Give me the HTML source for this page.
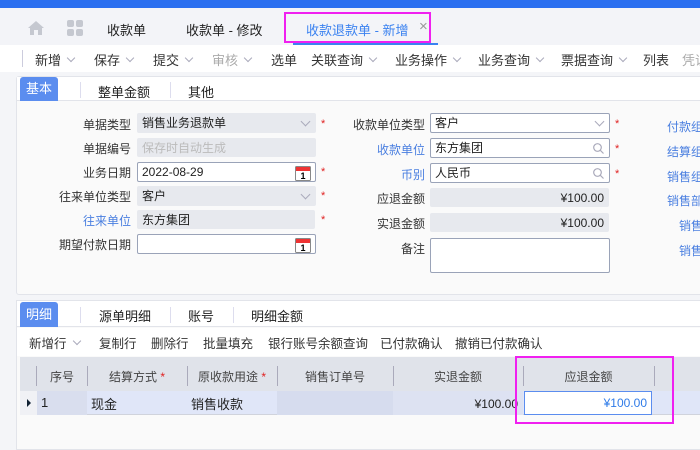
<!DOCTYPE html><html><head><meta charset="utf-8"><style>
*{margin:0;padding:0;box-sizing:border-box}
body{width:700px;height:443px;overflow:hidden;background:#f4f5f8;font-family:"Liberation Sans","Noto Sans CJK SC",sans-serif;font-size:12px;color:#222;position:relative}
.a{position:absolute;white-space:nowrap}
.lb{position:absolute;text-align:right;color:#333;font-size:12px}
.bl{color:#4a7fe0}
.in{position:absolute;height:20px;border:1px solid #9aa3b8;border-radius:2px;background:#fff;padding-left:4px;line-height:18px;font-size:12px}
.ro{background:#e7e9ee;border-color:#e7e9ee}
.st{position:absolute;color:#e02020;font-size:11px}
.cv{position:absolute;right:6px;top:4px;width:7px;height:7px;border-right:1px solid #aab;border-bottom:1px solid #aab;transform:rotate(45deg)}
.t{position:absolute;top:50px;font-size:13px;color:#333;white-space:nowrap}
.b{position:absolute;top:333px;font-size:12.5px;color:#333;white-space:nowrap}
.dd{display:inline-block;width:6px;height:6px;border-right:1px solid #aab;border-bottom:1px solid #aab;transform:rotate(45deg);margin:0 0 4px 7px}
</style></head><body>
<div class="a" style="left:0;top:0;width:700px;height:8px;background:#2a6ff0"></div>
<div class="a" style="left:0;top:8px;width:700px;height:37px;background:#f3f4f8"></div>
<svg class="a" style="left:27px;top:20px" width="18" height="16" viewBox="0 0 18 16"><path d="M9 1L1 8h2v7h4v-5h4v5h4V8h2z" fill="#c5c8d0"/></svg>
<svg class="a" style="left:67px;top:20px" width="16" height="16"><rect x="0" y="0" width="7" height="7" rx="2" fill="#c5c8d0"/><rect x="9" y="0" width="7" height="7" rx="2" fill="#c5c8d0"/><rect x="0" y="9" width="7" height="7" rx="2" fill="#c5c8d0"/><rect x="9" y="9" width="7" height="7" rx="2" fill="#c5c8d0"/></svg>
<div class="a" style="left:107px;top:20px;font-size:13px">收款单</div>
<div class="a" style="left:186px;top:20px;font-size:13px">收款单 - 修改</div>
<div class="a" style="left:284px;top:12px;width:147px;height:31px;border:2px solid #f020f0"></div>
<div class="a" style="left:306px;top:20px;font-size:13px;color:#3b82f0">收款退款单 - 新增</div>
<div class="a" style="left:419px;top:18px;font-size:15px;color:#999">×</div>
<div class="a" style="left:293px;top:43px;width:145px;height:2px;background:#3b82f0"></div>
<div class="a" style="left:0;top:45px;width:700px;height:27px;background:#fff"></div>
<div class="a" style="left:22px;top:50px;width:1px;height:17px;background:#ccd"></div>
<div class="t" style="left:35px">新增<i class="dd"></i></div>
<div class="t" style="left:94px">保存<i class="dd"></i></div>
<div class="t" style="left:153px">提交<i class="dd"></i></div>
<div class="t" style="left:212px;color:#aaa">审核<i class="dd"></i></div>
<div class="t" style="left:271px">选单</div>
<div class="t" style="left:311px">关联查询<i class="dd"></i></div>
<div class="t" style="left:395px">业务操作<i class="dd"></i></div>
<div class="t" style="left:478px">业务查询<i class="dd"></i></div>
<div class="t" style="left:561px">票据查询<i class="dd"></i></div>
<div class="t" style="left:643px">列表</div>
<div class="t" style="left:682px;color:#aaa">凭证</div>
<!-- top panel -->
<div class="a" style="left:16px;top:76px;width:690px;height:219px;background:#fafafa;border:1px solid #e2e4ea;border-radius:3px"></div>
<div class="a" style="left:17px;top:77px;width:690px;height:24px;background:#fff;border-bottom:1px solid #e2e4ea"></div>
<div class="a" style="left:20px;top:77px;width:38px;height:24px;background:#5b8def;color:#fff;border-radius:3px 3px 0 0;text-align:center;line-height:24px;font-size:13px">基本</div>
<div class="a" style="left:80px;top:82px;width:1px;height:16px;background:#dde"></div>
<div class="a" style="left:98px;top:82px;font-size:13px">整单金额</div>
<div class="a" style="left:170px;top:82px;width:1px;height:16px;background:#dde"></div>
<div class="a" style="left:188px;top:82px;font-size:13px">其他</div>
<!-- left col -->
<div class="lb" style="left:0;width:131px;top:116px">单据类型</div>
<div class="in ro" style="left:137px;top:113px;width:179px">销售业务退款单<i class="cv"></i></div><div class="st" style="left:321px;top:118px">*</div>
<div class="lb" style="left:0;width:131px;top:140px">单据编号</div>
<div class="in ro" style="left:137px;top:138px;width:179px;height:19px;color:#bbb">保存时自动生成</div>
<div class="lb" style="left:0;width:131px;top:164px">业务日期</div>
<div class="in" style="left:137px;top:162px;width:179px">2022-08-29<svg style="position:absolute;right:4px;top:2px" width="16" height="16"><rect x="0.5" y="1.5" width="15" height="14" rx="1" fill="#fff" stroke="#888"/><rect x="1" y="2" width="14" height="4" fill="#e33"/><text x="8" y="14" font-size="9" font-weight="bold" text-anchor="middle" font-family="Liberation Sans">1</text></svg></div><div class="st" style="left:321px;top:166px">*</div>
<div class="lb" style="left:0;width:131px;top:188px">往来单位类型</div>
<div class="in ro" style="left:137px;top:186px;width:179px">客户<i class="cv"></i></div><div class="st" style="left:321px;top:190px">*</div>
<div class="lb bl" style="left:0;width:131px;top:212px">往来单位</div>
<div class="in ro" style="left:137px;top:210px;width:178px;height:19px">东方集团</div><div class="st" style="left:321px;top:214px">*</div>
<div class="lb" style="left:0;width:131px;top:236px">期望付款日期</div>
<div class="in" style="left:137px;top:234px;width:179px"><svg style="position:absolute;right:4px;top:2px" width="16" height="16"><rect x="0.5" y="1.5" width="15" height="14" rx="1" fill="#fff" stroke="#888"/><rect x="1" y="2" width="14" height="4" fill="#e33"/><text x="8" y="14" font-size="9" font-weight="bold" text-anchor="middle" font-family="Liberation Sans">1</text></svg></div>
<!-- right col -->
<div class="lb" style="left:300px;width:125px;top:116px">收款单位类型</div>
<div class="in" style="left:430px;top:113px;width:180px">客户<i class="cv"></i></div><div class="st" style="left:615px;top:118px">*</div>
<div class="lb bl" style="left:300px;width:125px;top:141px">收款单位</div>
<div class="in" style="left:430px;top:138px;width:180px">东方集团<svg style="position:absolute;right:5px;top:4px" width="11" height="11"><circle cx="4.5" cy="4.5" r="3.8" fill="none" stroke="#aab" stroke-width="1.2"/><path d="M7.3 7.3L10.5 10.5" stroke="#aab" stroke-width="1.2"/></svg></div><div class="st" style="left:615px;top:143px">*</div>
<div class="lb bl" style="left:300px;width:125px;top:166px">币别</div>
<div class="in" style="left:430px;top:163px;width:180px">人民币<svg style="position:absolute;right:5px;top:4px" width="11" height="11"><circle cx="4.5" cy="4.5" r="3.8" fill="none" stroke="#aab" stroke-width="1.2"/><path d="M7.3 7.3L10.5 10.5" stroke="#aab" stroke-width="1.2"/></svg></div><div class="st" style="left:615px;top:168px">*</div>
<div class="lb" style="left:300px;width:125px;top:190px">应退金额</div>
<div class="in ro" style="left:430px;top:188px;width:179px;height:19px;text-align:right;padding-right:4px">¥100.00</div>
<div class="lb" style="left:300px;width:125px;top:215px">实退金额</div>
<div class="in ro" style="left:430px;top:213px;width:179px;height:19px;text-align:right;padding-right:4px">¥100.00</div>
<div class="lb" style="left:300px;width:125px;top:240px">备注</div>
<div class="in" style="left:430px;top:238px;width:180px;height:35px"></div>
<div class="a bl" style="left:667px;top:118px">付款组</div>
<div class="a bl" style="left:667px;top:143px">结算组</div>
<div class="a bl" style="left:667px;top:168px">销售组</div>
<div class="a bl" style="left:667px;top:192px">销售部</div>
<div class="a bl" style="left:679px;top:217px">销售</div>
<div class="a bl" style="left:679px;top:242px">销售</div>
<!-- bottom panel -->
<div class="a" style="left:16px;top:300px;width:690px;height:150px;background:#fafafa;border:1px solid #e2e4ea"></div>
<div class="a" style="left:17px;top:301px;width:690px;height:26px;background:#fff;border-bottom:1px solid #e2e4ea"></div>
<div class="a" style="left:20px;top:302px;width:38px;height:25px;background:#5b8def;color:#fff;border-radius:3px 3px 0 0;text-align:center;line-height:25px;font-size:13px">明细</div>
<div class="a" style="left:80px;top:307px;width:1px;height:16px;background:#dde"></div>
<div class="a" style="left:99px;top:306px;font-size:13px">源单明细</div>
<div class="a" style="left:170px;top:307px;width:1px;height:16px;background:#dde"></div>
<div class="a" style="left:188px;top:306px;font-size:13px">账号</div>
<div class="a" style="left:233px;top:307px;width:1px;height:16px;background:#dde"></div>
<div class="a" style="left:251px;top:306px;font-size:13px">明细金额</div>
<div class="a" style="left:17px;top:328px;width:690px;height:28px;background:#fff"></div>
<div class="b" style="left:29px">新增行<i class="dd"></i></div>
<div class="b" style="left:99px">复制行</div>
<div class="b" style="left:151px">删除行</div>
<div class="b" style="left:203px">批量填充</div>
<div class="b" style="left:268px">银行账号余额查询</div>
<div class="b" style="left:380px">已付款确认</div>
<div class="b" style="left:455px">撤销已付款确认</div>
<div class="a" style="left:20px;top:357px;width:690px;height:34px;background:#e0e3ea"></div>
<div class="a" style="left:20px;top:391px;width:690px;height:24px;background:#e0e6f8;border-bottom:1px solid #d0d3dc"></div>
<div class="a" style="left:20px;top:391px;width:17px;height:24px;background:#f0f1f5"></div>
<div class="a" style="left:27px;top:399px;width:0;height:0;border-left:4px solid #123;border-top:4px solid transparent;border-bottom:4px solid transparent"></div>
<div class="a" style="left:37px;top:391px;width:50px;height:24px;background:#d9deee"></div>
<div class="a" style="left:277px;top:391px;width:116px;height:24px;background:#d6dcee"></div>
<div class="a" style="left:393px;top:391px;width:130px;height:24px;background:#dde2f2"></div>
<div class="a" style="left:36px;top:366px;width:1px;height:20px;background:#aab"></div>
<div class="a" style="left:87px;top:366px;width:1px;height:20px;background:#aab"></div>
<div class="a" style="left:187px;top:366px;width:1px;height:20px;background:#aab"></div>
<div class="a" style="left:277px;top:366px;width:1px;height:20px;background:#aab"></div>
<div class="a" style="left:393px;top:366px;width:1px;height:20px;background:#aab"></div>
<div class="a" style="left:523px;top:366px;width:1px;height:20px;background:#aab"></div>
<div class="a" style="left:654px;top:366px;width:1px;height:20px;background:#aab"></div>
<div class="a" style="left:37px;top:368px;width:50px;text-align:center;color:#444">序号</div>
<div class="a" style="left:87px;top:368px;width:100px;text-align:center;color:#444">结算方式 <span style="color:#e02020">*</span></div>
<div class="a" style="left:187px;top:368px;width:90px;text-align:center;color:#444">原收款用途 <span style="color:#e02020">*</span></div>
<div class="a" style="left:277px;top:368px;width:116px;text-align:center;color:#444">销售订单号</div>
<div class="a" style="left:393px;top:368px;width:130px;text-align:center;color:#444">实退金额</div>
<div class="a" style="left:523px;top:368px;width:131px;text-align:center;color:#444">应退金额</div>
<div class="a" style="left:41px;top:395px;font-size:13px">1</div>
<div class="a" style="left:91px;top:394px;font-size:13px">现金</div>
<div class="a" style="left:191px;top:394px;font-size:13px">销售收款</div>
<div class="a" style="left:393px;top:397px;width:125px;text-align:right">¥100.00</div>
<div class="a" style="left:524px;top:391px;width:128px;height:24px;background:#fff;border:1px solid #5b8def;text-align:right;padding-right:4px;line-height:22px;color:#2f7be8">¥100.00</div>
<div class="a" style="left:515px;top:356px;width:159px;height:68px;border:2px solid #f020f0"></div>
</body></html>
